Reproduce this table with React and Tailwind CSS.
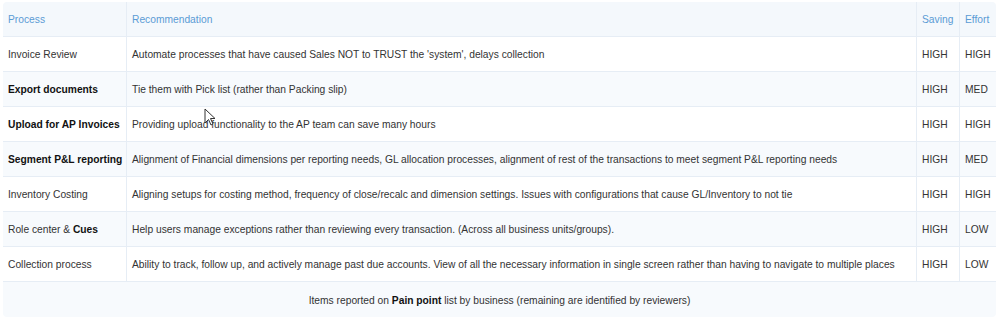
import React from "react";

const rows = [
  { p: <>Invoice Review</>, r: "Automate processes that have caused Sales NOT to TRUST the 'system', delays collection", s: "HIGH", e: "HIGH" },
  { p: <b className="font-bold text-[#111]">Export documents</b>, r: "Tie them with Pick list (rather than Packing slip)", s: "HIGH", e: "MED" },
  { p: <b className="font-bold text-[#111]">Upload for AP Invoices</b>, r: "Providing upload functionality to the AP team can save many hours", s: "HIGH", e: "HIGH" },
  { p: <b className="font-bold text-[#111]">Segment P&amp;L reporting</b>, r: "Alignment of Financial dimensions per reporting needs, GL allocation processes, alignment of rest of the transactions to meet segment P&L reporting needs", s: "HIGH", e: "MED" },
  { p: <>Inventory Costing</>, r: "Aligning setups for costing method, frequency of close/recalc and dimension settings. Issues with configurations that cause GL/Inventory to not tie", s: "HIGH", e: "HIGH" },
  { p: <>Role center &amp; <b className="font-bold text-[#111]">Cues</b></>, r: "Help users manage exceptions rather than reviewing every transaction. (Across all business units/groups).", s: "HIGH", e: "LOW" },
  { p: <>Collection process</>, r: "Ability to track, follow up, and actively manage past due accounts. View of all the necessary information in single screen rather than having to navigate to multiple places", s: "HIGH", e: "LOW" },
];

const cols = "grid grid-cols-[124px_790px_43px_36px]";

export default function App() {
  return (
    <div className="relative w-[1000px] h-[321px] bg-white pt-[2px] pl-[3px] text-[10.25px] text-[#333]" style={{ fontFamily: '"Liberation Sans", Arial, sans-serif' }}>
      <div className="w-[993px] rounded-[4px] overflow-hidden bg-white">
        <div className={`${cols} h-[35px] bg-[#f4f8fc] text-[#5b9bd5] border-b border-[#e6edf5]`}>
          <div className="flex items-center pl-[5px] pt-[2px] border-r border-[#e6edf5]">Process</div>
          <div className="flex items-center pl-[5px] pt-[2px] border-r border-[#e6edf5]">Recommendation</div>
          <div className="flex items-center pl-[5px] pt-[2px] border-r border-[#e6edf5]">Saving</div>
          <div className="flex items-center pl-[5px] pt-[2px]">Effort</div>
        </div>
        {rows.map((row, i) => (
          <div key={i} className={`${cols} h-[35px] border-b border-[#e6edf5] ${i % 2 === 1 ? "bg-[#f7fafd]" : "bg-white"}`}>
            <div className="flex items-center pl-[5px] pt-[2px] border-r border-[#e6edf5] whitespace-nowrap"><span>{row.p}</span></div>
            <div className="flex items-center pl-[5px] pt-[2px] border-r border-[#e6edf5] whitespace-nowrap">{row.r}</div>
            <div className="flex items-center pl-[5px] pt-[2px] border-r border-[#e6edf5]">{row.s}</div>
            <div className="flex items-center pl-[5px] pt-[2px]">{row.e}</div>
          </div>
        ))}
        <div className="h-[35px] flex items-center justify-center pt-[2px] bg-[#f7fafd]">
          <span>Items reported on <b className="font-bold text-[#111]">Pain point</b> list by business (remaining are identified by reviewers)</span>
        </div>
      </div>
      <svg className="absolute left-[204px] top-[108px]" width="12" height="18" viewBox="0 0 12 18">
        <path d="M1 1 L1 15 L4.5 11.5 L7 17 L9 16 L6.5 10.5 L11 10.5 Z" fill="white" stroke="#333" strokeWidth="1" strokeLinejoin="round" />
      </svg>
    </div>
  );
}
